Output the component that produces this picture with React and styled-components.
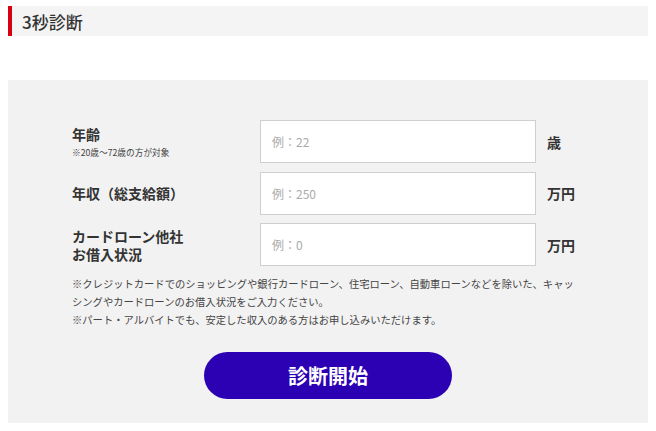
import React from "react";
import styled, { createGlobalStyle } from "styled-components";

const Global = createGlobalStyle`
  html, body { margin: 0; padding: 0; background: #fff; }
  body {
    font-family: "Noto Sans CJK JP", "Noto Sans", sans-serif;
    color: #333;
  }
  * { box-sizing: border-box; }
`;

const Page = styled.div`
  padding: 6px 8px 8px;
`;

const Heading = styled.h2`
  margin: 0;
  height: 30px;
  display: flex;
  align-items: center;
  background: #f4f4f4;
  border-left: 4px solid #d7000f;
  padding-left: 10px;
  font-size: 17px;
  font-weight: 500;
  color: #333;
  letter-spacing: 0;
`;

const Panel = styled.section`
  margin-top: 44px;
  background: #f2f2f2;
  height: 343px;
  padding: 40px 0 24px;
`;

const Form = styled.div`
  width: 512px;
  margin: 0 auto;
  display: flex;
  flex-direction: column;
`;

const Rows = styled.div`
  display: flex;
  flex-direction: column;
  gap: 8.5px;
`;

const Row = styled.div`
  display: grid;
  grid-template-columns: 188px 276px 1fr;
  align-items: center;
`;

const Label = styled.div`
  display: flex;
  flex-direction: column;
  justify-content: center;
  font-size: 14px;
  font-weight: 700;
  line-height: 18px;
  color: #333;
`;

const Note = styled.span`
  margin-top: 4px;
  font-size: 8.7px;
  font-weight: 400;
  line-height: 12px;
  color: #444;
`;

const Input = styled.input`
  width: 276px;
  height: 43px;
  border: 1px solid #cfcfcf;
  background: #fff;
  padding: 0 11px;
  font-family: "Noto Sans CJK JP", "Noto Sans", sans-serif;
  font-size: 12px;
  color: #333;
  outline: none;
  &::placeholder { color: #aaa; }
`;

const Unit = styled.span`
  padding-left: 11px;
  font-size: 14px;
  font-weight: 700;
  color: #333;
`;

const Notes = styled.p`
  margin: 9px 0 0;
  font-size: 10.3px;
  line-height: 18px;
  color: #444;
`;

const ButtonWrap = styled.div`
  display: flex;
  justify-content: center;
  margin-top: 23px;
`;

const Button = styled.button`
  width: 248px;
  height: 47px;
  border: none;
  border-radius: 24px;
  background: #2c00b3;
  color: #fff;
  font-family: "Noto Sans CJK JP", "Noto Sans", sans-serif;
  font-size: 20px;
  font-weight: 700;
  cursor: pointer;
`;

const fields = [
  { label: ["年齢"], note: "※20歳〜72歳の方が対象", ph: "例：22", unit: "歳" },
  { label: ["年収（総支給額）"], ph: "例：250", unit: "万円" },
  { label: ["カードローン他社", "お借入状況"], ph: "例：0", unit: "万円" },
];

export default function App() {
  return (
    <>
      <Global />
      <Page>
        <Heading>3秒診断</Heading>
        <Panel>
          <Form>
            <Rows>
              {fields.map((f, i) => (
                <Row key={i}>
                  <Label>
                    {f.label.map((l, j) => (
                      <span key={j}>{l}</span>
                    ))}
                    {f.note && <Note>{f.note}</Note>}
                  </Label>
                  <Input type="text" placeholder={f.ph} />
                  <Unit>{f.unit}</Unit>
                </Row>
              ))}
            </Rows>
            <Notes>
              ※クレジットカードでのショッピングや銀行カードローン、住宅ローン、自動車ローンなどを除いた、キャッシングやカードローンのお借入状況をご入力ください。
              <br />
              ※パート・アルバイトでも、安定した収入のある方はお申し込みいただけます。
            </Notes>
            <ButtonWrap>
              <Button type="button">診断開始</Button>
            </ButtonWrap>
          </Form>
        </Panel>
      </Page>
    </>
  );
}
